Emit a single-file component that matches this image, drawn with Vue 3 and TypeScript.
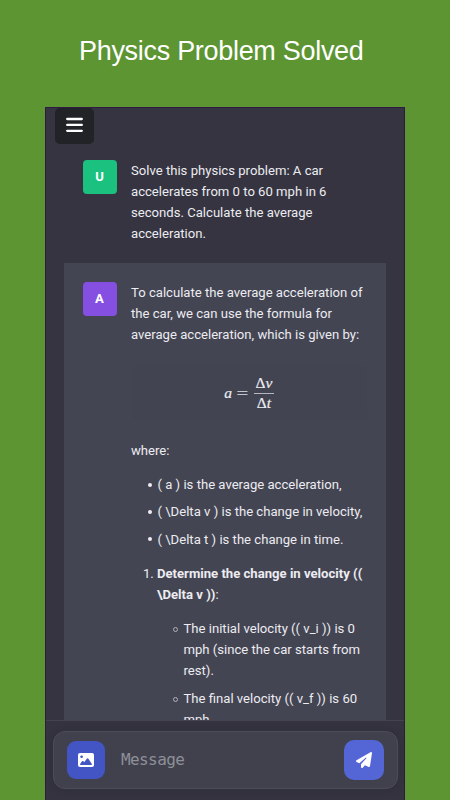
<script setup lang="ts">
const question: string[] = [
  'Solve this physics problem: A car',
  'accelerates from 0 to 60 mph in 6',
  'seconds. Calculate the average',
  'acceleration.',
]
const intro: string[] = [
  'To calculate the average acceleration of',
  'the car, we can use the formula for',
  'average acceleration, which is given by:',
]
const terms: string[] = [
  '( a ) is the average acceleration,',
  '( \\Delta v ) is the change in velocity,',
  '( \\Delta t ) is the change in time.',
]
const values: string[][] = [
  ['The initial velocity (( v_i )) is 0', 'mph (since the car starts from', 'rest).'],
  ['The final velocity (( v_f )) is 60', 'mph.'],
]
</script>

<template>
  <div class="page">
    <h1 class="title">Physics Problem Solved</h1>
    <div class="phone">
      <header class="top">
        <button class="menu" aria-label="Menu">
          <svg width="17" height="16" viewBox="0 0 17 16">
            <path d="M1.2 2H15.8M1.2 7.9H15.8M1.2 13.8H15.8" stroke="#fff" stroke-width="2.3" stroke-linecap="round" />
          </svg>
        </button>
      </header>
      <main class="chat">
        <section class="message">
          <div class="avatar user">U</div>
          <div class="body">
            <p><span v-for="l in question" :key="l" class="line">{{ l }}</span></p>
          </div>
        </section>
        <section class="message reply">
          <div class="avatar assistant">A</div>
          <div class="body">
            <p><span v-for="l in intro" :key="l" class="line">{{ l }}</span></p>
            <div class="formula">
              <i class="lhs">a</i>
              <svg class="equals" width="11" height="7" viewBox="0 0 11 7">
                <path d="M.3 1.5H10.5M.3 4.5H10.5" stroke="#c4c4cb" stroke-width="1" />
              </svg>
              <div class="fraction">
                <span class="numerator">Δ<i>v</i></span>
                <span class="denominator">Δ<i>t</i></span>
              </div>
            </div>
            <p class="where">where:</p>
            <ul class="terms">
              <li v-for="t in terms" :key="t"><span class="dot"></span>{{ t }}</li>
            </ul>
            <div class="step">
              <span class="number">1.</span>
              <div>
                <p><b class="line">Determine the change in velocity ((</b><span class="line"><b>\Delta v ))</b>:</span></p>
                <ul class="values">
                  <li v-for="(v, i) in values" :key="i">
                    <span class="ring"></span>
                    <div><span v-for="l in v" :key="l" class="line">{{ l }}</span></div>
                  </li>
                </ul>
              </div>
            </div>
          </div>
        </section>
      </main>
      <footer class="footer">
        <div class="composer">
          <button class="image" aria-label="Add image">
            <svg width="16" height="14" viewBox="0 0 16 14">
              <path fill="#fff" fill-rule="evenodd" d="M2 0H14Q16 0 16 2V12Q16 14 14 14H2Q0 14 0 12V2Q0 0 2 0ZM3.6 2.4A1.35 1.35 0 1 0 3.6 5.1A1.35 1.35 0 1 0 3.6 2.4ZM2.4 11.9H13.6Q14.2 11.4 13.7 10.8L10.2 5.500Q9.600 4.900 9 5.500L6.200 9.300L5.200 8.100Q4.700 7.700 4.200 8.100L2.100 10.900Q1.800 11.500 2.400 11.900Z" />
            </svg>
          </button>
          <span class="placeholder">Message</span>
          <button class="send" aria-label="Send">
            <svg width="16" height="16" viewBox="0 0 512 512">
              <path fill="#fff" d="M498.100 5.600c10.100 7 15.400 19.100 13.500 31.200l-64 416c-1.500 9.700-7.400 18.200-16 23s-18.900 5.400-28 1.600L284 427.700l-68.500 74.100c-8.900 9.700-22.900 12.900-35.200 8.100S160 493.200 160 480V396.400c0-4 1.500-7.800 4.200-10.700L331.800 202.800c5.800-6.300 5.600-16-.4-22s-15.700-6.400-22-.7L106 360.800 17.700 316.600C7.100 311.300 .3 300.700 0 288.900s5.900-22.800 16.100-28.700l448-256c10.700-6.100 23.900-5.500 34 1.400z" />
            </svg>
          </button>
        </div>
      </footer>
    </div>
  </div>
</template>

<style>
body { margin: 0; }
</style>

<style scoped>
* { box-sizing: border-box; }
.page {
  width: 450px;
  height: 800px;
  overflow: hidden;
  background: #5c9532;
  display: flex;
  flex-direction: column;
  align-items: center;
}
.title {
  margin: 0;
  width: 450px;
  height: 107px;
  flex: none;
  padding: 35px 0 0 79px;
  color: #fff;
  font: 400 27px/32px "Liberation Sans", Arial, sans-serif;
  letter-spacing: -0.3px;
  white-space: nowrap;
}
.phone {
  width: 360px;
  height: 693px;
  display: flex;
  flex-direction: column;
  background: #353440;
  border: solid #2e1b45;
  border-width: 1px 1px 0;
  color: #ececf1;
  font: 13.12px/21px Roboto, sans-serif;
}
.top { height: 36px; flex: none; padding-left: 9px; }
button { border: 0; padding: 0; display: flex; align-items: center; justify-content: center; flex: none; }
.menu { width: 39px; height: 36px; border-radius: 5px; background: #222327; padding-bottom: 2px; }
.chat { flex: 1; min-height: 0; overflow: hidden; padding: 0 18px; }
.message { display: flex; gap: 14.5px; padding: 16px 0 19px 18.5px; }
.reply { background: #444553; padding-top: 19px; height: 600px; }
.avatar {
  width: 34px;
  height: 34px;
  flex: none;
  border-radius: 4px;
  font-weight: 700;
  line-height: 34px;
  text-align: center;
  color: #fff;
}
.user { background: #1bc27f; }
.assistant { background: #854fe2; }
p, ul { margin: 0; padding: 0; }
.line { display: block; white-space: nowrap; }
.formula {
  width: 236px;
  height: 55px;
  margin: 20px 0;
  border-radius: 7px;
  background: #434451;
  display: flex;
  align-items: center;
  justify-content: center;
  font: 15.5px/18px "Liberation Serif", serif;
  -webkit-text-stroke: 0.2px #ececf1;
}
.lhs { margin-right: 5px; }
.equals { margin-right: 6px; margin-top: 2px; }
.fraction { display: flex; flex-direction: column; text-align: center; width: 20px; }
.numerator { border-bottom: 1px solid #b5b5bc; height: 20px; }
.denominator { height: 18px; }
ul { list-style: none; }
.terms { padding-left: 16.5px; margin-top: 13px; }
.terms li { display: flex; align-items: center; height: 21px; margin-bottom: 6.4px; white-space: nowrap; }
.dot { width: 4px; height: 4px; flex: none; border-radius: 50%; background: #ececf1; margin-right: 6px; }
.step { display: flex; gap: 4px; padding-left: 12px; margin-top: 13px; }
.number { width: 10px; flex: none; }
.step b { font-weight: 700; }
.values { padding-left: 26.5px; margin-top: 13px; }
.values li { display: flex; margin-bottom: 7px; }
.ring { width: 5px; height: 5px; border: 1px solid #b0b0ba; border-radius: 50%; margin: 9px 6px 0 -11px; flex: none; }
.footer { height: 80px; flex: none; border-top: 1px solid #444450; padding: 10px 6px 10px 7px; background: #34333f; }
.composer {
  height: 58px;
  border: 1px solid #4b4c58;
  border-radius: 12px;
  background: #40414d;
  display: flex;
  align-items: center;
  padding: 0 13px;
  box-shadow: 0 0 8px rgba(20, 20, 30, .15);
}
.image { width: 38px; height: 38px; border-radius: 9px; background: #4354c5; }
.send { width: 40px; height: 40px; border-radius: 10px; background: #5466d5; }
.placeholder { flex: 1; padding-left: 16px; color: #8e8f98; font: 16px/22px "DejaVu Sans Mono", monospace; letter-spacing: -0.6px; }
</style>
